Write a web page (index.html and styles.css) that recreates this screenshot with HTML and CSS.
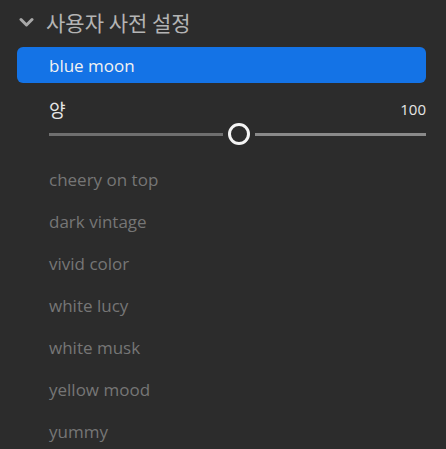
FILE: index.html
```html
<!DOCTYPE html>
<html>
<head>
	<meta charset="utf-8">
	<title>사용자 사전 설정</title>
	<link rel="stylesheet" href="styles.css">
</head>
<body>
	<div class="panel">
		<div class="group-head">
			<svg class="chevron" width="15" height="10" viewBox="0 0 15 10">
				<path d="M2 2.5 L7.5 8 L13 2.5" fill="none" stroke="#a8a8a8" stroke-width="3" stroke-linecap="round" stroke-linejoin="round"/>
			</svg>
			<span class="group-title">사용자 사전 설정</span>
		</div>

		<div class="preset active">blue moon</div>

		<div class="amount">
			<div class="amount-row">
				<span class="amount-label">양</span>
				<span class="amount-value">100</span>
			</div>
			<div class="slider">
				<div class="track left"></div>
				<div class="thumb"></div>
				<div class="track right"></div>
			</div>
		</div>

		<div class="preset">cheery on top</div>
		<div class="preset">dark vintage</div>
		<div class="preset">vivid color</div>
		<div class="preset">white lucy</div>
		<div class="preset">white musk</div>
		<div class="preset">yellow mood</div>
		<div class="preset">yummy</div>
	</div>
</body>
</html>
```

FILE: styles.css
```css
body {
	margin: 0;
	background-color: #2c2c2c;
	font-family: "Open Sans", "Noto Sans CJK KR", sans-serif;
}
.panel {
	padding: 0 20px 0 17px;
}
.group-head {
	display: flex;
	align-items: center;
	height: 44px;
	padding-left: 2px;
}
.chevron {
	margin-right: 12px;
}
.group-title {
	font-family: "Noto Sans CJK KR", sans-serif;
	font-size: 21px;
	color: #b4b4b4;
}
.preset {
	display: flex;
	align-items: center;
	height: 42px;
	padding-left: 32px;
	font-size: 17px;
	color: #767676;
}
.preset.active {
	height: 36px;
	margin-top: 3px;
	border-radius: 6px;
	background-color: #1473e6;
	color: #f2f2f2;
}
.amount {
	padding: 16px 0 0 32px;
	height: 75px;
	box-sizing: border-box;
}
.amount-row {
	display: flex;
	justify-content: space-between;
	align-items: center;
	height: 20px;
}
.amount-label {
	font-family: "Noto Sans CJK KR", sans-serif;
	font-size: 18px;
	color: #e6e6e6;
}
.amount-value {
	font-size: 15px;
	color: #e6e6e6;
}
.slider {
	display: flex;
	align-items: center;
	height: 24px;
	margin-top: 3px;
}
.track {
	height: 3px;
}
.track.left {
	width: 174px;
	background-color: #6f6f6f;
}
.track.right {
	flex: 1;
	background-color: #8a8a8a;
}
.thumb {
	width: 16px;
	height: 16px;
	margin: 0 5px;
	border: 3px solid #f4f4f4;
	border-radius: 50%;
}
```
